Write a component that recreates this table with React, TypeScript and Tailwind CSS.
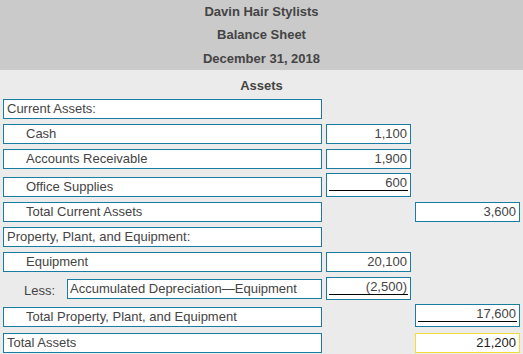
import React from 'react';

type Row = {
  label: string;
  indent?: boolean;
  less?: boolean;
  col1?: string;
  col2?: string;
  underline?: 1 | 2;
  total?: boolean;
  mt: string;
  h: string;
};

const rows: Row[] = [
  { label: 'Current Assets:', mt: 'mt-0', h: 'h-[20px]' },
  { label: 'Cash', indent: true, col1: '1,100', mt: 'mt-[5px]', h: 'h-[20px]' },
  { label: 'Accounts Receivable', indent: true, col1: '1,900', mt: 'mt-[5px]', h: 'h-[20px]' },
  { label: 'Office Supplies', indent: true, col1: '600', underline: 1, mt: 'mt-[4px]', h: 'h-[24px]' },
  { label: 'Total Current Assets', indent: true, col2: '3,600', mt: 'mt-[5px]', h: 'h-[20px]' },
  { label: 'Property, Plant, and Equipment:', mt: 'mt-[5px]', h: 'h-[20px]' },
  { label: 'Equipment', indent: true, col1: '20,100', mt: 'mt-[5px]', h: 'h-[20px]' },
  { label: 'Accumulated Depreciation\u2014Equipment', less: true, col1: '(2,500)', underline: 1, mt: 'mt-[5px]', h: 'h-[23px]' },
  { label: 'Total Property, Plant, and Equipment', indent: true, col2: '17,600', underline: 2, mt: 'mt-[4px]', h: 'h-[23px]' },
  { label: 'Total Assets', col2: '21,200', total: true, mt: 'mt-[6px]', h: 'h-[20px]' },
];

function ValueBox({ value, underline, total, width, h }: { value?: string; underline?: boolean; total?: boolean; width: string; h: string }) {
  if (!value) return <div className={`${width} shrink-0`} />;
  const border = total ? 'border-[#f2dc3a]' : 'border-[#1a7ca0]';
  if (underline) {
    return (
      <div className={`${width} ${h} shrink-0 border ${border} bg-white px-[2px] pt-[1px]`}>
        <div className="h-[16px] border-b-[1.5px] border-black pr-[1px] text-right leading-[15px]">{value}</div>
      </div>
    );
  }
  return (
    <div className={`${width} h-[20px] shrink-0 border ${border} bg-white pr-[3px] text-right leading-[18px] ${total ? 'text-[#222]' : ''}`}>
      {value}
    </div>
  );
}

export default function App() {
  return (
    <div className="h-[354px] w-[523px] overflow-hidden bg-[#ebebeb] text-[13px] text-[#444]" style={{ fontFamily: '"Liberation Sans", Arial, sans-serif' }}>
      <div className="bg-[#cacaca] font-bold">
        <div className="flex h-[23px] items-center justify-center">Davin Hair Stylists</div>
        <div className="flex h-[24px] items-center justify-center">Balance Sheet</div>
        <div className="flex h-[23px] items-center justify-center">December 31, 2018</div>
      </div>
      <div className="flex h-[29px] items-center justify-center pt-[2px] font-bold">Assets</div>
      <div className="pl-[3px]">
        {rows.map((r, i) => (
          <div key={i} className={`flex items-end gap-[4px] ${r.mt} ${r.h}`}>
            {r.less ? (
              <div className="flex w-[319px] shrink-0 items-center">
                <span className="w-[64px] pl-[21px] pt-[2px]">Less:</span>
                <div className="h-[20px] flex-1 border border-[#1a7ca0] bg-white pl-[2px] leading-[18px]">{r.label}</div>
              </div>
            ) : (
              <div className={`h-[20px] w-[319px] shrink-0 border border-[#1a7ca0] bg-white leading-[18px] ${r.indent ? 'pl-[22px]' : 'pl-[3px]'}`}>
                {r.label}
              </div>
            )}
            <ValueBox value={r.col1} underline={r.underline === 1} width="w-[85px]" h={r.h} />
            <ValueBox value={r.col2} underline={r.underline === 2} total={r.total} width="w-[105px]" h={r.h} />
          </div>
        ))}
      </div>
    </div>
  );
}
